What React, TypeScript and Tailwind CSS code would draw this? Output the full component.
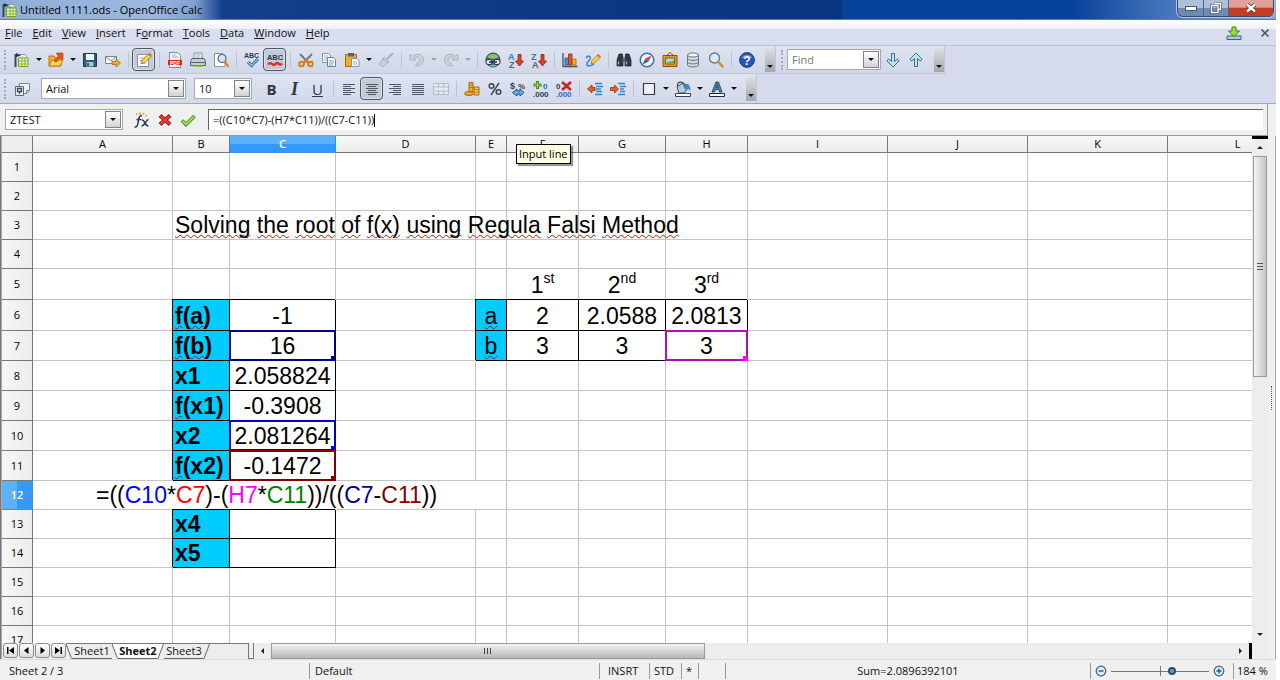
import { Fragment, useState } from 'react';
import type { ReactNode } from 'react';
import clsx from 'clsx';

interface Cell {
  text?: ReactNode;
  label?: boolean;
  boxed?: boolean;
  align?: 'left' | 'center';
  mark?: Mark;
}

interface Mark {
  frame: string;
  handle: string;
}

function Svg({ children }: { children: ReactNode }) {
  return (
    <svg viewBox="0 0 16 16" className="h-4 w-4 shrink-0" fill="none" aria-hidden="true">
      {children}
    </svg>
  );
}

const icons: Record<string, ReactNode> = {
  new: (
    <Svg>
      <path d="M1.500 2v13" stroke="#3b4656" strokeWidth="2" />
      <path d="M4 2.500h7l2.500 3" stroke="#8592a6" fill="#fff" />
      <path d="M4.500 6h9.500v8.500H4.500z" fill="#f2fadf" stroke="#6ea51a" />
      <path d="M4.500 9h9.500M4.500 12h9.500M8 6v8.500M11 6v8.500" stroke="#7fb51e" />
      <path d="M2 1l5 2.500L2 5z" fill="#2a3442" />
    </Svg>
  ),
  open: (
    <Svg>
      <path d="M1 14V4h5l1 2h6v8z" fill="#f2b21e" stroke="#b9750b" />
      <path d="M1 14l3-6h11l-3 6z" fill="#ffd34e" stroke="#c07c10" />
      <path d="M6 9l4.500-5L9 2.500 8.500 1H15v6.500l-1.500-.5L12 5.500 8.500 10z" fill="#e2571c" stroke="#a53208" strokeWidth=".6" />
    </Svg>
  ),
  save: (
    <Svg>
      <path d="M1.500 1.500h13v13h-13z" fill="#355a75" stroke="#1e3a50" />
      <path d="M4 2h8v6H4z" fill="#f1f6fa" />
      <path d="M4.500 10h7v4.500h-7z" fill="#9fc8dd" />
      <path d="M6 11v3" stroke="#1e3a50" strokeWidth="1.500" />
    </Svg>
  ),
  mail: (
    <Svg>
      <path d="M.5 4.500h11v7H.5z" fill="#fff" stroke="#7a8797" />
      <path d="M.5 4.500L6 9l5.500-4.500" stroke="#7a8797" />
      <path d="M7 9.500h4V7l4.500 4-4.500 4v-2.500H7z" fill="#f6a821" stroke="#a8660a" strokeWidth=".8" />
    </Svg>
  ),
  edit: (
    <Svg>
      <path d="M1.500 2.500h11v12h-11z" fill="#fff" stroke="#8794a8" />
      <path d="M4 6h5M4 8.500h3M4 11h6" stroke="#9aa6b8" />
      <path d="M5.500 11.500l1-3.500 6.500-6.500 2.500 2.500L9 10.500z" fill="#ffdb3d" stroke="#8d6a18" strokeWidth=".8" />
      <path d="M12 2.500L13.500 1l2 2L14 4.500z" fill="#e45a50" />
    </Svg>
  ),
  pdf: (
    <Svg>
      <path d="M2.500.5h8l3 3v12h-11z" fill="#f5f7fa" stroke="#7c899b" />
      <path d="M5 3h4M5 5h6" stroke="#a2aebe" />
      <path d="M1 8h14v5H1z" fill="#d8261d" />
      <text x="8" y="12.500" fontSize="5" fontWeight="700" textAnchor="middle" fill="#fff" fontFamily="Liberation Sans, sans-serif">PDF</text>
    </Svg>
  ),
  print: (
    <Svg>
      <path d="M4 1h8v6H4z" fill="#fff" stroke="#7f8b99" />
      <path d="M5.500 3h5M5.500 5h5" stroke="#8fa7c2" />
      <path d="M2 6.500h12l1.500 3v4H.5v-4z" fill="#c6ccd3" stroke="#59636f" />
      <path d="M1 10.500h14" stroke="#59636f" />
      <path d="M3.500 13.500h9v1.500h-9z" fill="#8bd04a" />
    </Svg>
  ),
  preview: (
    <Svg>
      <path d="M1.500 1.500h8l2.500 2v11H1.500z" fill="#fff" stroke="#8592a6" />
      <circle cx="9" cy="6.500" r="4" fill="#cfe6f7" stroke="#52677e" strokeWidth="1.200" />
      <path d="M12 10l3 4" stroke="#d9861c" strokeWidth="2.200" strokeLinecap="round" />
    </Svg>
  ),
  spell: (
    <Svg>
      <text x="7.500" y="6" fontSize="7" fontWeight="700" textAnchor="middle" fill="#2b3a4c" fontFamily="Liberation Sans, sans-serif">ABC</text>
      <path d="M4 10l3.500 3.500L14 7" stroke="#1e5c8c" strokeWidth="3" />
      <path d="M4 10l3.500 3.500L14 7" stroke="#a4d6f2" strokeWidth="1.200" />
    </Svg>
  ),
  autospell: (
    <Svg>
      <text x="8" y="7.500" fontSize="7.500" fontWeight="700" textAnchor="middle" fill="#2b3a4c" fontFamily="Liberation Sans, sans-serif">ABC</text>
      <path d="M1 12.500c1.500-2 3-1.500 4-.5s2.500 1 3.500 0 2.500-1 3.500 0 2 .5 3-.5" stroke="#dc2a1e" strokeWidth="2.400" />
    </Svg>
  ),
  cut: (
    <Svg>
      <path d="M2 2l9 9.500M14 2L5 11.500" stroke="#6f7986" strokeWidth="2" />
      <circle cx="3.500" cy="12" r="2.300" stroke="#e07b14" strokeWidth="2" />
      <circle cx="12.500" cy="12" r="2.300" stroke="#e07b14" strokeWidth="2" />
      <path d="M6 10l2-2 2 2" stroke="#e07b14" strokeWidth="2" />
    </Svg>
  ),
  copy: (
    <Svg>
      <path d="M1.500 1.500h6l2 2v7h-8z" fill="#fff" stroke="#7e92a8" />
      <path d="M3 4h4M3 6h4M3 8h3" stroke="#86b3d4" />
      <path d="M6.500 5.500h6l2 2v7h-8z" fill="#fff" stroke="#6d8198" />
      <path d="M8 9h5M8 11h5M8 13h4" stroke="#67a0c8" />
    </Svg>
  ),
  paste: (
    <Svg>
      <path d="M1.500 2.500h11v12h-11z" fill="#f2ae25" stroke="#a6690a" />
      <path d="M4 1h6v3.500H4z" fill="#5a6470" />
      <path d="M7.500 6.500h5l2.500 2v6H7.500z" fill="#fff" stroke="#7e92a8" />
      <path d="M9 10h4M9 12h4" stroke="#86b3d4" />
    </Svg>
  ),
  brush: (
    <Svg>
      <path d="M15 1L9 7" stroke="#aab2c2" strokeWidth="2" />
      <path d="M6 5l5 5-2 1-4-4z" fill="#d3d8e3" stroke="#a7afc0" />
      <path d="M5 7L1 12l4 3 5-5z" fill="#c9cfdc" stroke="#a7afc0" />
    </Svg>
  ),
  undo: (
    <Svg>
      <path d="M1 2v6h6L5 6c3-2 6-1 6 2 0 2-2 3.500-4 4v2c5-.5 7.500-3 7.500-6.500C14.500 2 8 .5 3.500 4.500z" fill="#cdd3df" stroke="#a9b1c1" />
    </Svg>
  ),
  redo: (
    <Svg>
      <path d="M15 2v6H9l2-2C8 4 5 5 5 8c0 2 2 3.500 4 4v2c-5-.5-7.500-3-7.500-6.500C1.500 2 8 .5 12.500 4.500z" fill="#cdd3df" stroke="#a9b1c1" />
    </Svg>
  ),
  link: (
    <Svg>
      <circle cx="8" cy="8" r="7" fill="#3f6fa8" stroke="#274a73" />
      <path d="M2.500 5c2-4 9-4 11 0-3 2-8 2-11 0zM4 13c2 2 6 2 8 0z" fill="#95c548" />
      <rect x="1" y="7.500" width="6" height="5" rx="2" fill="#dfe6e9" stroke="#29333d" />
      <rect x="9" y="7.500" width="6" height="5" rx="2" fill="#dfe6e9" stroke="#29333d" />
      <path d="M4 10h8" stroke="#29333d" strokeWidth="1.500" />
    </Svg>
  ),
  sortAsc: <SortIcon top="A" bottom="Z" />,
  sortDesc: <SortIcon top="Z" bottom="A" />,
  chart: (
    <Svg>
      <path d="M1 1v13.500h14.500" stroke="#44515f" strokeWidth="1.300" />
      <path d="M3 6h3.500v7H3z" fill="#3e95d8" stroke="#1c5688" strokeWidth=".8" />
      <path d="M6.500 2H10v11H6.500z" fill="#e5502a" stroke="#962b0c" strokeWidth=".8" />
      <path d="M10.500 7H14v6h-3.500z" fill="#f7b02c" stroke="#a36a0b" strokeWidth=".8" />
    </Svg>
  ),
  draw: (
    <Svg>
      <path d="M1 6c2-3 5-2 4 1-1 2-4 4-3 6 1 1.500 5 1 7-1" stroke="#3a8ad2" strokeWidth="1.600" />
      <path d="M6 12l1-3.500L13 2.500l2.500 2.500L9.500 11z" fill="#ffd23c" stroke="#a3701c" strokeWidth=".8" />
      <path d="M12 3.500L13.300 2l2.400 2.400-1.500 1.500z" fill="#e3645b" />
    </Svg>
  ),
  find: (
    <Svg>
      <path d="M3 2h3.500l.5 4v8H1V8zM9.500 2H13l2 6v6H9V6z" fill="#2f3a47" stroke="#161d26" strokeWidth=".7" />
      <path d="M6.500 6h3v4h-3z" fill="#55626f" />
      <path d="M2.500 9.500v3M10.500 9.500v3" stroke="#9fb0c0" strokeWidth="1.300" />
    </Svg>
  ),
  navigator: (
    <Svg>
      <circle cx="8" cy="8" r="6.800" fill="#eef4fb" stroke="#4270a4" strokeWidth="1.500" />
      <path d="M12.500 3.500L9.500 9.500l-3-3z" fill="#e23a26" />
      <path d="M3.500 12.500l3-6 3 3z" fill="#2e5fa0" />
    </Svg>
  ),
  gallery: (
    <Svg>
      <path d="M5 3l3-2.500L11 3" stroke="#8c5a14" />
      <path d="M1 3.500h14v11H1z" fill="#e8981c" stroke="#8c520c" />
      <path d="M3.500 6h9v6h-9z" fill="#a6dcf5" stroke="#7a4a0c" strokeWidth=".8" />
      <path d="M4 11.500c2-3 5-1 8-3v3z" fill="#67a832" />
    </Svg>
  ),
  database: (
    <Svg>
      <path d="M2.500 3v10c0 2.500 11 2.500 11 0V3z" fill="#d5dade" stroke="#6d7780" />
      <ellipse cx="8" cy="3" rx="5.500" ry="2" fill="#f5f7f8" stroke="#6d7780" />
      <path d="M2.500 6.500c0 2.500 11 2.500 11 0M2.500 10c0 2.500 11 2.500 11 0" stroke="#6d7780" />
    </Svg>
  ),
  zoom: (
    <Svg>
      <circle cx="6.500" cy="6" r="5" fill="#dcecf8" stroke="#6a7b8e" strokeWidth="1.400" />
      <path d="M10.500 10l4 4.500" stroke="#dd8a1c" strokeWidth="2.500" strokeLinecap="round" />
    </Svg>
  ),
  help: (
    <Svg>
      <circle cx="8" cy="8" r="7.400" fill="#2757b5" stroke="#173a80" />
      <path d="M2.500 6a6 5 0 0 1 11 0z" fill="#6f97dd" />
      <text x="8" y="12.500" fontSize="12" fontWeight="700" textAnchor="middle" fill="#fff" fontFamily="Liberation Sans, sans-serif">?</text>
    </Svg>
  ),
  down: (
    <Svg>
      <path d="M6.500 1.500h3v8l3-2.500 1.500 2L8 15 2 9l1.500-2 3 2.500z" fill="#c3e4f0" stroke="#37708a" />
    </Svg>
  ),
  up: (
    <Svg>
      <path d="M6.500 14.500h3v-8l3 2.500L14 7 8 1 2 7l1.500 2 3-2.500z" fill="#c3e4f0" stroke="#37708a" />
    </Svg>
  ),
  styles: (
    <Svg>
      <path d="M5.500 2.500h10v7l-3 3h-7z" fill="#edf0f5" stroke="#7b8794" />
      <path d="M12.500 12.500v-3h3" stroke="#7b8794" />
      <path d="M1.500 5.500h8v9h-8z" fill="#e3e8ef" stroke="#5e6a78" />
      <path d="M3.500 7.500h4v3h-4zM5.500 10v3" stroke="#3f4a57" strokeWidth="1.300" />
    </Svg>
  ),
  alignLeft: (
    <Svg>
      <path d="M2 3.500h12M2 5.500h8M2 7.500h12M2 9.500h8M2 11.500h12M2 13.500h8" stroke="#4c5866" />
    </Svg>
  ),
  alignCenter: (
    <Svg>
      <path d="M2 3.500h12M4 5.500h8M2 7.500h12M4 9.500h8M2 11.500h12M4 13.500h8" stroke="#4c5866" />
    </Svg>
  ),
  alignRight: (
    <Svg>
      <path d="M2 3.500h12M6 5.500h8M2 7.500h12M6 9.500h8M2 11.500h12M6 13.500h8" stroke="#4c5866" />
    </Svg>
  ),
  justify: (
    <Svg>
      <path d="M2 3.500h12M2 5.500h12M2 7.500h12M2 9.500h12M2 11.500h12M2 13.500h12" stroke="#4c5866" />
    </Svg>
  ),
  merge: (
    <Svg>
      <path d="M.5 2.500h15v11H.5zM.5 6h15M.5 10h15M5.500 2.500V6M10.500 2.500V6M5.500 10v3.500M10.500 10v3.500" fill="#e4e8f1" stroke="#b3bbca" />
    </Svg>
  ),
  currency: (
    <Svg>
      <path d="M5 1.500h4v9H5z" fill="#f4b13a" stroke="#a86711" />
      <path d="M10 6h5v8h-5z" fill="#f9c65b" stroke="#a86711" />
      <ellipse cx="5" cy="12.500" rx="4.500" ry="2" fill="#f1a327" stroke="#a86711" />
      <path d="M5 4h4M5 6.500h4M10 8.500h5M10 11h5" stroke="#a86711" strokeWidth=".8" />
    </Svg>
  ),
  percent: (
    <Svg>
      <circle cx="4.500" cy="5" r="2.300" stroke="#3a4654" strokeWidth="1.500" />
      <circle cx="11.500" cy="11" r="2.300" stroke="#3a4654" strokeWidth="1.500" />
      <path d="M12 2L4 14" stroke="#3a4654" strokeWidth="1.400" />
    </Svg>
  ),
  standard: (
    <Svg>
      <text x="0" y="7.500" fontSize="9" fontWeight="700" fill="#2f3d4d" fontFamily="Liberation Sans, sans-serif">$</text>
      <text x="8" y="7.500" fontSize="8" fontWeight="700" fill="#2f3d4d" fontFamily="Liberation Sans, sans-serif">%</text>
      <path d="M2.500 11.500L7 8v2h3V8l4 3.500-4 3.500v-2H7v2z" fill="#6bb2e6" stroke="#1d4f86" />
    </Svg>
  ),
  addDecimal: (
    <Svg>
      <path d="M4.500 0v8M.5 4h8" stroke="#3f8f1a" strokeWidth="3" />
      <path d="M4.500 1v6M1.500 4h6" stroke="#a5df5c" />
      <text x="10" y="7.500" fontSize="8" fontWeight="700" fill="#2c67c4" fontFamily="Liberation Sans, sans-serif">0</text>
      <text x="0" y="15.500" fontSize="8" fontWeight="700" fill="#2f3d4d" fontFamily="Liberation Sans, sans-serif">.000</text>
    </Svg>
  ),
  delDecimal: (
    <Svg>
      <text x="0" y="7.500" fontSize="8" fontWeight="700" fill="#2f3d4d" fontFamily="Liberation Sans, sans-serif">0</text>
      <text x="0" y="15.500" fontSize="8" fontWeight="700" fill="#2c67c4" fontFamily="Liberation Sans, sans-serif">.000</text>
      <path d="M6 1l9 8M15 1L6 9" stroke="#cf2019" strokeWidth="2.600" />
    </Svg>
  ),
  outdent: (
    <Svg>
      <path d="M8 2.500h7M9 5.500h7M9 8h5M9 10.500h6M8 13.500h7" stroke="#3884c8" strokeWidth="1.300" />
      <path d="M.5 8L5 4v2.500h3v3H5V12z" fill="#e8601d" stroke="#8f2e08" strokeWidth=".8" />
    </Svg>
  ),
  indent: (
    <Svg>
      <path d="M8 2.500h7M10 5.500h6M10 8h4M10 10.500h5M8 13.500h7" stroke="#3884c8" strokeWidth="1.300" />
      <path d="M8.500 8L4.500 4v2.500H.5v3h4V12z" fill="#e8601d" stroke="#8f2e08" strokeWidth=".8" />
    </Svg>
  ),
  border: (
    <Svg>
      <path d="M2.500 2.500h11v11h-11z" fill="#eef1f8" stroke="#2f3945" strokeWidth="1.200" />
    </Svg>
  ),
  fill: (
    <Svg>
      <path d="M2 6l6-4 6 4-5 6H4z" fill="#b9cfdd" stroke="#3a4856" />
      <path d="M2.500 5.500c-1-6 7-6 7 1" stroke="#3a4856" strokeWidth="1.200" />
      <path d="M10 3c4-1 5.500 2 5.500 8-2-4-3-4-6-2z" fill="#3c8ac4" />
      <path d="M.5 12.500h15v3H.5z" fill="#fff" stroke="#3a4856" />
    </Svg>
  ),
  fontColor: (
    <Svg>
      <path d="M3 11L7 1h2.500L13 11h-2.500l-.8-2.500H6.500L5.500 11zM7 6.500h2.200L8.200 3.500z" fill="#4c86a8" stroke="#1e3a50" strokeWidth=".8" />
      <path d="M.5 12.500h15v3H.5z" fill="#fff" stroke="#1e2a36" />
    </Svg>
  ),
  fx: (
    <Svg>
      <path d="M2 1.500l1 1M6 .5v2M10 1l-1 1.500M13 3.500l-1.500.5" stroke="#f0a818" strokeWidth="1.800" />
      <path d="M.5 15c2 .5 3-1 3.500-4l1-5c.5-2 1.500-2.500 3-2M2.500 7.500h5" stroke="#2c3a4a" strokeWidth="1.500" />
      <path d="M8 8c3-.5 2.500 6.500 6.500 6M14.500 7.500C12 7.500 11 14 7.500 14" stroke="#2c3a4a" strokeWidth="1.500" />
    </Svg>
  ),
  cancel: (
    <Svg>
      <path d="M3 3.500l10 9M13 3.500l-10 9" stroke="#8e120c" strokeWidth="4" />
      <path d="M3.500 4l9 8M12.500 4l-9 8" stroke="#e23a30" strokeWidth="2.400" />
    </Svg>
  ),
  accept: (
    <Svg>
      <path d="M2 8.500l4 4L14.500 4" stroke="#3f8a18" strokeWidth="3.600" />
      <path d="M2.500 9l3.500 3.300L14 4.500" stroke="#a9e052" strokeWidth="1.800" />
    </Svg>
  ),
};

function SortIcon({ top, bottom }: { top: string; bottom: string }) {
  return (
    <Svg>
      <text x="0" y="7.500" fontSize="9" fontWeight="700" fill="#2f7cb6" fontFamily="Liberation Sans, sans-serif">{top}</text>
      <text x="1" y="15.500" fontSize="9" fontWeight="700" fill="#566270" fontFamily="Liberation Sans, sans-serif">{bottom}</text>
      <path d="M10 2.500h3V9h2.500l-4 5-4-5H10z" fill="#dd4326" stroke="#8d1d0c" strokeWidth=".8" />
    </Svg>
  );
}

function Arrow({ dim }: { dim?: boolean }) {
  return <span className={clsx('border-x-[3px] border-t-[3px] border-x-transparent', dim ? 'border-t-[#9aa1b0]' : 'border-t-[#111]')} />;
}

function ToolButton({ icon, label, pressed }: { icon: string; label: string; pressed?: boolean }) {
  return (
    <button
      type="button"
      aria-label={label}
      className={clsx(
        'flex h-[23px] w-[23px] shrink-0 items-center justify-center rounded-sm',
        pressed && 'border border-[#4f5563] bg-[#c5cad8] ring-1 ring-inset ring-[#dde1ec]',
      )}
    >
      {icons[icon]}
    </button>
  );
}

function DropButton({ label, dim }: { label: string; dim?: boolean }) {
  return (
    <button type="button" aria-label={label} className="flex h-[23px] w-[11px] shrink-0 items-center justify-center">
      <Arrow dim={dim} />
    </button>
  );
}

function Sep() {
  return (
    <span className="flex w-2 shrink-0 justify-center">
      <span className="h-4 w-px bg-[#bcc3d3]" />
    </span>
  );
}

function Grip() {
  return <span className="ml-1 h-5 w-[6px] shrink-0 border-l-2 border-dotted border-[#a3a9b8]" />;
}

function Overflow({ label }: { label: string }) {
  return (
    <button type="button" aria-label={label} className="flex h-6 w-[10px] shrink-0 items-end justify-center bg-linear-to-b from-[#dcdfe6] to-[#a4a7ad] pb-1">
      <Arrow />
    </button>
  );
}

function Combo({ value, label, className, muted }: { value: string; label: string; className: string; muted?: boolean }) {
  return (
    <div className={clsx('flex h-[21px] shrink-0 items-stretch border border-[#a5a9b3] bg-white p-px', className)}>
      <input aria-label={label} defaultValue={value} className={clsx('min-w-0 flex-1 px-[3px] outline-none', muted && 'text-[#777]')} />
      <button type="button" aria-label={`${label} list`} className="flex w-4 items-center justify-center border border-[#7f838b] bg-linear-to-b from-white to-[#d3d3d3]">
        <Arrow />
      </button>
    </div>
  );
}

const menus = ['File', 'Edit', 'View', 'Insert', 'Format', 'Tools', 'Data', 'Window', 'Help'];
const accessKey: Record<string, number> = { Format: 1 };

const standardTools: (string | [string, string, boolean?])[] = [
  ['new', 'New'], 'drop', ['open', 'Open'], 'drop', ['save', 'Save'], ['mail', 'E-mail'], '|',
  ['edit', 'Edit File', true], '|', ['pdf', 'Export PDF'], ['print', 'Print'], ['preview', 'Page Preview'], '|',
  ['spell', 'Spelling'], ['autospell', 'AutoSpellcheck', true], '|', ['cut', 'Cut'], ['copy', 'Copy'], ['paste', 'Paste'], 'drop',
  ['brush', 'Format Paintbrush'], '|', ['undo', 'Undo'], 'dim', ['redo', 'Redo'], 'dim', '|', ['link', 'Hyperlink'],
  ['sortAsc', 'Sort Ascending'], ['sortDesc', 'Sort Descending'], '|', ['chart', 'Chart'], ['draw', 'Draw Functions'], '|',
  ['find', 'Find & Replace'], ['navigator', 'Navigator'], ['gallery', 'Gallery'], ['database', 'Data Sources'], ['zoom', 'Zoom'], '|',
  ['help', 'Help'],
];

const formatTools: (string | [string, string, boolean?])[] = [
  '|', ['alignLeft', 'Align Left'], ['alignCenter', 'Align Center', true], ['alignRight', 'Align Right'], ['justify', 'Justified'],
  ['merge', 'Merge Cells'], '|', ['currency', 'Currency'], ['percent', 'Percent'], ['standard', 'Standard Format'],
  ['addDecimal', 'Add Decimal Place'], ['delDecimal', 'Delete Decimal Place'], '|', ['outdent', 'Decrease Indent'],
  ['indent', 'Increase Indent'], '|', ['border', 'Borders'], 'drop', ['fill', 'Background Color'], 'drop', ['fontColor', 'Font Color'], 'drop',
];

function Tools({ items }: { items: typeof standardTools }) {
  return (
    <>
      {items.map((item, i) => {
        if (item === '|') return <Sep key={i} />;
        if (typeof item === 'string') return <DropButton key={i} label="More" dim={item === 'dim'} />;
        return <ToolButton key={i} icon={item[0]} label={item[1]} pressed={item[2]} />;
      })}
    </>
  );
}

function Wavy({ children, dark }: { children: ReactNode; dark?: boolean }) {
  return (
    <span
      className={clsx(
        'underline decoration-wavy decoration-1 underline-offset-1 [text-decoration-skip-ink:none]',
        dark ? 'decoration-[#8a2048]' : 'decoration-[#f00000]',
      )}
    >
      {children}
    </span>
  );
}

function Ordinal({ n, suffix }: { n: string; suffix: string }) {
  return (
    <>
      {n}
      <sup className="-top-[10px] text-[14px]">{suffix}</sup>
    </>
  );
}

const title = 'Solving the root of f(x) using Regula Falsi Method';

const columns: [string, string][] = [
  ['A', 'w-[140px]'], ['B', 'w-[57px]'], ['C', 'w-[106px]'], ['D', 'w-[140px]'], ['E', 'w-[31px]'], ['F', 'w-[72px]'],
  ['G', 'w-[87px]'], ['H', 'w-[82px]'], ['I', 'w-[140px]'], ['J', 'w-[140px]'], ['K', 'w-[140px]'], ['L', 'w-[140px]'],
];

const marks: Record<string, Mark> = {
  navy: { frame: 'border-[#000080]', handle: 'bg-[#000080]' },
  blue: { frame: 'border-[#0000c0]', handle: 'bg-[#0000ff]' },
  maroon: { frame: 'border-[#800000]', handle: 'bg-[#800000]' },
  magenta: { frame: 'border-[#b010b0]', handle: 'bg-[#ff00ff]' },
};

const fOf = (arg: ReactNode) => <><Wavy dark>f</Wavy>({arg})</>;
const label = (text: ReactNode): Cell => ({ text: <b>{text}</b>, label: true, boxed: true, align: 'left' });
const value = (text?: ReactNode, mark?: Mark): Cell => ({ text, boxed: true, mark });

const cells: Record<string, Cell> = {
  B3: {
    align: 'left',
    text: title.split(' ').map((word, i) => (
      <Fragment key={i}>
        {i > 0 && ' '}
        <Wavy>{word}</Wavy>
      </Fragment>
    )),
  },
  F5: { text: <Ordinal n="1" suffix="st" /> },
  G5: { text: <Ordinal n="2" suffix="nd" /> },
  H5: { text: <Ordinal n="3" suffix="rd" /> },
  B6: label(fOf(<Wavy dark>a</Wavy>)),
  C6: value('-1'),
  B7: label(fOf(<Wavy dark>b</Wavy>)),
  C7: value('16', marks.navy),
  B8: label('x1'),
  C8: value('2.058824'),
  B9: label(fOf('x1')),
  C9: value('-0.3908'),
  B10: label('x2'),
  C10: value('2.081264', marks.blue),
  B11: label(fOf('x2')),
  C11: value('-0.1472', marks.maroon),
  B13: label('x4'),
  C13: value(),
  B14: label('x5'),
  C14: value(),
  E6: { text: <Wavy dark>a</Wavy>, label: true, boxed: true },
  F6: value('2'),
  G6: value('2.0588'),
  H6: value('2.0813'),
  E7: { text: <Wavy dark>b</Wavy>, label: true, boxed: true },
  F7: value('3'),
  G7: value('3'),
  H7: value('3', marks.magenta),
};

function rowHeight(row: number) {
  if (row === 5 || row === 6) return 'h-[31px]';
  if (row >= 7 && row <= 11) return 'h-[30px]';
  return 'h-[29px]';
}

function GridCell({ cell }: { cell: Cell }) {
  return (
    <td
      className={clsx(
        'relative border-r border-b p-0 align-bottom text-[23px] leading-7 whitespace-nowrap',
        cell.boxed ? 'border-black shadow-[-1px_-1px_0_0_#000]' : 'border-[#c4c4c4]',
        cell.label && 'bg-[#00ccff]',
        cell.align === 'left' ? 'pl-[2px] text-left' : 'text-center',
      )}
    >
      {cell.text && <span className="relative z-10">{cell.text}</span>}
      {cell.mark && (
        <>
          <span className={clsx('absolute -inset-px z-10 border-2', cell.mark.frame)} />
          <span className={clsx('absolute -right-px -bottom-px z-10 h-[5px] w-[5px]', cell.mark.handle)} />
        </>
      )}
    </td>
  );
}

function InlineFormula() {
  return (
    <td colSpan={5} className="border-r border-b border-[#c4c4c4] bg-white p-0 pl-[63px] text-left align-bottom text-[23px] leading-7 whitespace-nowrap">
      =((<span className="text-[#0000ff]">C10</span>*<span className="text-[#ff0000]">C7</span>)-(
      <span className="text-[#ff00ff]">H7</span>*<span className="text-[#008000]">C11</span>))/((
      <span className="text-[#000080]">C7</span>-<span className="text-[#800000]">C11</span>))
    </td>
  );
}

function SheetGrid() {
  return (
    <table className="w-0 min-w-full table-fixed border-separate border-spacing-0 font-['Liberation_Sans',Arial,sans-serif] text-black">
      <colgroup>
        <col className="w-[31px]" />
        {columns.map(([name, width]) => (
          <col key={name} className={width} />
        ))}
      </colgroup>
      <thead>
        <tr className="h-[17px] font-['Open_Sans','Segoe_UI',sans-serif] text-[11px] leading-4">
          <th aria-label="Select all" className="border-r border-b border-[#777] bg-[#eee] p-0" />
          {columns.map(([name]) => (
            <th
              key={name}
              scope="col"
              className={clsx(
                'border-r border-b p-0',
                name === 'C'
                  ? 'border-[#3d8fe0] bg-linear-to-b from-[#5fb0fb] from-50% to-[#3399ff] to-50% font-semibold text-white'
                  : 'border-[#777] bg-linear-to-b from-[#f7f7f7] to-[#ececec] font-normal',
              )}
            >
              {name}
            </th>
          ))}
        </tr>
      </thead>
      <tbody>
        {Array.from({ length: 17 }, (_, i) => i + 1).map(row => (
          <tr key={row} className={rowHeight(row)}>
            <th
              scope="row"
              className={clsx(
                "border-r border-b p-0 font-['Open_Sans','Segoe_UI',sans-serif] text-[11px] leading-4",
                row === 12
                  ? 'border-[#3d8fe0] bg-linear-to-r from-[#5fb0fb] from-50% to-[#3399ff] to-50% font-semibold text-white'
                  : 'border-[#777] bg-linear-to-r from-[#f7f7f7] to-[#ececec] font-normal',
              )}
            >
              {row}
            </th>
            {row === 12 && <InlineFormula />}
            {columns.slice(row === 12 ? 5 : 0).map(([name]) => (
              <GridCell key={name} cell={cells[name + row] ?? {}} />
            ))}
          </tr>
        ))}
      </tbody>
    </table>
  );
}

function TitleBar() {
  return (
    <header className="flex h-5 items-start justify-between border-b border-[#5d7fb0] bg-[linear-gradient(90deg,#8fadd6_0,#9cb8df_150px,#7f9fce_195px,#12408c_222px,#0b3681_50%,#0a3681_66%,#07429a_66%,#07429a_84%,#4a78bd_92%,#8aa8d6)]">
      <div className="flex h-[19px] items-center gap-1 pl-[2px] text-[11px] leading-4 text-black">
        <span className="flex h-4 w-[14px] items-center">{icons.new}</span>
        <h1>Untitled 1111.ods - OpenOffice Calc</h1>
      </div>
      <div className="mr-[2px] flex h-[17px] overflow-hidden rounded-b-md border border-t-0 border-[#34496c] ring-1 ring-[#b5c6e0]">
        <button type="button" aria-label="Minimize" className="flex w-[26px] items-end justify-center border-r border-[#4d648a] bg-linear-to-b from-[#b0bfd8] from-50% to-[#7089b3] to-50% pb-[5px]">
          <span className="h-[5px] w-3 border border-[#4a566d] bg-white" />
        </button>
        <button type="button" aria-label="Restore" className="flex w-[25px] items-center justify-center border-r border-[#4d648a] bg-linear-to-b from-[#b0bfd8] from-50% to-[#7089b3] to-50%">
          <svg viewBox="0 0 12 12" className="h-3 w-3" fill="none" aria-hidden="true">
            <path d="M4.500 1.500h6v6h-2M1.500 3.500h6.500v7H1.500z" stroke="#3e4a60" strokeWidth="2.600" />
            <path d="M4.500 1.500h6v6h-2M1.500 3.500h6.500v7H1.500z" stroke="#fff" strokeWidth="1.400" />
          </svg>
        </button>
        <button type="button" aria-label="Close" className="flex w-11 items-center justify-center bg-linear-to-b from-[#e0a198] from-45% to-[#c23e22] to-50%">
          <svg viewBox="0 0 12 12" className="h-3 w-3" fill="none" aria-hidden="true">
            <path d="M2 2.500l8 7M10 2.500l-8 7" stroke="#5a2a28" strokeWidth="4" />
            <path d="M2 2.500l8 7M10 2.500l-8 7" stroke="#fff" strokeWidth="2.400" />
          </svg>
        </button>
      </div>
    </header>
  );
}

function MenuBar() {
  return (
    <nav className="flex h-[26px] items-center border-b border-[#b9c1d3] bg-linear-to-b from-white from-0% via-[#eef1f8] via-35% to-[#d9deee] to-36% pr-[6px] pl-[5px] text-[11px]">
      {menus.map(menu => {
        const at = accessKey[menu] ?? 0;
        return (
          <button key={menu} type="button" className="mr-[10px] leading-4">
            {menu.slice(0, at)}
            <u>{menu[at]}</u>
            {menu.slice(at + 1)}
          </button>
        );
      })}
      <button type="button" aria-label="Download update" className="mr-[18px] ml-auto">
        <Svg>
          <path d="M1 11h14v3.500H1z" fill="#a9cede" stroke="#37657c" />
          <path d="M6 2h4v4h3.500L8 11.500 2.500 6H6z" fill="#9be02e" stroke="#3f8312" />
        </Svg>
      </button>
      <button type="button" aria-label="Close document">
        <svg viewBox="0 0 10 10" className="h-[10px] w-[10px]" fill="none" aria-hidden="true">
          <path d="M1.500 1.500l7 7M8.500 1.500l-7 7" stroke="#4a5262" strokeWidth="1.600" />
        </svg>
      </button>
    </nav>
  );
}

function FormulaBar() {
  const [formula, setFormula] = useState('=((C10*C7)-(H7*C11))/((C7-C11))');
  return (
    <div className="mr-2 flex h-8 items-center border-r border-b border-[#999] bg-[#f0f0f0] pr-1 pl-[5px]">
      <Combo label="Name Box" value="ZTEST" className="w-[118px]" />
      <div className="flex w-[85px] shrink-0 pl-[7px]">
        <ToolButton icon="fx" label="Function Wizard" />
        <ToolButton icon="cancel" label="Cancel" />
        <ToolButton icon="accept" label="Accept" />
      </div>
      <label className="flex h-[21px] min-w-0 flex-1 items-center border-t border-l border-[#666] bg-white pl-1">
        <input
          aria-label="Input line"
          value={formula}
          onChange={e => setFormula(e.target.value)}
          className="[field-sizing:content] outline-none"
        />
        <span className="h-[13px] w-px bg-black" />
      </label>
    </div>
  );
}

const navPaths: [string, string][] = [
  ['First sheet', 'M3 3h1.500v7H3zM10 3v7L5 6.500z'],
  ['Previous sheet', 'M8.500 3v7l-4.500-3.500z'],
  ['Next sheet', 'M4.500 3v7L9 6.500z'],
  ['Last sheet', 'M3 3v7l5-3.500zM8.500 3H10v7H8.500z'],
];

function Slant({ back, under }: { back?: boolean; under?: string }) {
  return (
    <svg viewBox="0 0 6 15" className="h-[15px] w-[6px] shrink-0" fill="none" aria-hidden="true">
      {under && <path d={under} fill="#fff" />}
      <path d={back ? 'M0 0L5.500 14.500' : 'M5.500 0L0 14.500'} stroke="#666" />
    </svg>
  );
}

function SheetBar() {
  return (
    <div className="flex h-4 items-stretch bg-[#ededed]">
      <div className="flex gap-px pl-px">
        {navPaths.map(([name, d]) => (
          <button key={name} type="button" aria-label={name} className="flex h-[15px] w-[15px] items-center justify-center rounded-[3px] border border-[#8c8c8c] bg-linear-to-b from-white to-[#ddd]">
            <svg viewBox="0 0 13 13" className="h-[13px] w-[13px]" aria-hidden="true">
              <path d={d} fill="#000" />
            </svg>
          </button>
        ))}
      </div>
      <div className="flex w-[183px] border-t border-r border-[#777] text-[11px] leading-[14px]">
        <Slant back />
        <button type="button" className="h-[15px] w-10 border-b border-[#666]">Sheet1</button>
        <Slant back under="M0 0h6v15z" />
        <button type="button" className="h-[15px] w-10 border-b border-[#666] bg-white font-bold">Sheet2</button>
        <Slant under="M0 0h6L0 15z" />
        <button type="button" className="h-[15px] w-10 border-b border-[#666]">Sheet3</button>
        <Slant />
      </div>
      <div className="w-[5px] border-r border-b border-[#777]" />
      <button type="button" aria-label="Scroll left" className="flex w-[17px] items-center justify-center">
        <span className="border-y-[3px] border-r-[3px] border-y-transparent border-r-[#222]" />
      </button>
      <div className="flex flex-1">
        <div className="flex w-[45%] items-center justify-center border border-[#999] bg-linear-to-b from-[#f2f2f2] to-[#b9b9b9]">
          <span className="h-[6px] w-2 bg-[repeating-linear-gradient(90deg,#444_0_1px,transparent_1px_3px)]" />
        </div>
      </div>
      <button type="button" aria-label="Scroll right" className="mr-1 flex w-[10px] items-center justify-center">
        <span className="border-y-[3px] border-l-[3px] border-y-transparent border-l-[#222]" />
      </button>
      <span className="w-[3px] bg-black" />
    </div>
  );
}

function VerticalScroll() {
  return (
    <div className="flex w-4 shrink-0 flex-col bg-[#ededed]">
      <span className="h-[3px] bg-black" />
      <button type="button" aria-label="Scroll up" className="flex h-[17px] items-center justify-center">
        <span className="border-x-[3px] border-b-[3px] border-x-transparent border-b-[#222]" />
      </button>
      <div className="flex-1 px-px">
        <div className="flex h-[47%] items-center justify-center border border-[#999] bg-linear-to-r from-[#f5f5f5] to-[#c4c4c4]">
          <span className="h-[7px] w-[6px] bg-[repeating-linear-gradient(180deg,#555_0_1px,transparent_1px_3px)]" />
        </div>
      </div>
      <button type="button" aria-label="Scroll down" className="mb-4 flex h-[17px] items-center justify-center">
        <span className="border-x-[3px] border-t-[3px] border-x-transparent border-t-[#222]" />
      </button>
    </div>
  );
}

function ZoomButton({ label: name, d }: { label: string; d: string }) {
  return (
    <button type="button" aria-label={name}>
      <svg viewBox="0 0 12 12" className="h-3 w-3" fill="none" aria-hidden="true">
        <circle cx="6" cy="6" r="4.800" fill="#d7eefa" stroke="#3c5f80" strokeWidth="1.200" />
        <path d={d} stroke="#1f5c8c" strokeWidth="1.400" />
      </svg>
    </button>
  );
}

function StatusBar() {
  return (
    <footer className="flex h-[21px] items-center border-t border-[#dcdcdc] bg-[#f0f0f0] pt-[2px] text-[11px] leading-4">
      <span className="w-[309px] pl-[9px]">Sheet 2 / 3</span>
      <span className="w-[290px] border-l border-[#999] pl-[5px]">Default</span>
      <span className="w-[50px] border-l border-[#999] pl-2">INSRT</span>
      <span className="w-8 border-l border-[#999] pl-1">STD</span>
      <span className="w-[17px] border-l border-[#999] pl-1">*</span>
      <span className="h-4 w-[27px] border-l border-[#999]" />
      <span className="flex-1 border-l border-[#999] text-center">Sum=2.0896392101</span>
      <div className="flex h-4 w-[143px] items-center gap-1 border-l border-[#999] pl-1">
        <ZoomButton label="Zoom out" d="M3.500 6h5" />
        <div className="relative flex h-4 min-w-0 flex-1 items-center">
          <span className="absolute left-1/2 h-[10px] w-px bg-[#777]" />
          <input
            type="range"
            aria-label="Zoom"
            min={0}
            max={100}
            defaultValue={63}
            className="relative h-px w-full appearance-none bg-[#777] [&::-webkit-slider-thumb]:h-2 [&::-webkit-slider-thumb]:w-2 [&::-webkit-slider-thumb]:appearance-none [&::-webkit-slider-thumb]:rounded-full [&::-webkit-slider-thumb]:border-2 [&::-webkit-slider-thumb]:border-[#2c4f70] [&::-webkit-slider-thumb]:bg-[#6f9dc0]"
          />
        </div>
        <ZoomButton label="Zoom in" d="M3.500 6h5M6 3.500v5" />
        <span className="w-1" />
      </div>
      <span className="w-[43px] border-l border-[#999] pl-[3px] whitespace-nowrap">184 %</span>
    </footer>
  );
}

export default function App() {
  return (
    <div className="h-screen bg-white pr-1">
      <div className="relative flex h-full flex-col overflow-hidden bg-[#f0f0f0] font-['Open_Sans','Segoe_UI',sans-serif] text-[11px] leading-4 text-[#111]">
        <TitleBar />
        <MenuBar />
        <div className="border-b border-[#a4a9b6] bg-[#d5dbec]">
          <div className="flex h-7">
            <div className="flex items-center border-r border-b border-[#c0c7d8] bg-linear-to-b from-[#dfe4f1] to-[#d0d7e8]">
              <Grip />
              <Tools items={standardTools} />
              <span className="w-[7px]" />
              <Overflow label="Standard toolbar options" />
            </div>
            <div className="flex items-center border-r border-b border-[#c0c7d8] bg-linear-to-b from-[#dfe4f1] to-[#d0d7e8] pl-px">
              <Grip />
              <Combo label="Find text" value="Find" className="w-[94px]" muted />
              <ToolButton icon="down" label="Find Next" />
              <ToolButton icon="up" label="Find Previous" />
              <span className="w-[7px]" />
              <Overflow label="Find toolbar options" />
            </div>
          </div>
          <div className="flex h-[29px]">
            <div className="flex items-center border-r border-[#c0c7d8] bg-linear-to-b from-[#dfe4f1] to-[#d3d9ea]">
              <Grip />
              <ToolButton icon="styles" label="Styles and Formatting" />
              <Combo label="Font Name" value="Arial" className="ml-2 w-[145px]" />
              <Combo label="Font Size" value="10" className="mx-2 w-[58px]" />
              <button type="button" className="h-[23px] w-[23px] text-[15px] font-bold text-[#2b3846]">B</button>
              <button type="button" className="h-[23px] w-[23px] font-['Liberation_Serif',serif] text-[18px] font-bold text-[#2b3846] italic">I</button>
              <button type="button" className="h-[23px] w-[23px] text-[15px] text-[#2b3846] underline">U</button>
              <Tools items={formatTools} />
              <span className="w-[7px]" />
              <Overflow label="Formatting toolbar options" />
            </div>
          </div>
        </div>
        <FormulaBar />
        <div className="flex min-h-0 flex-1 border-l border-[#777]">
          <div className="flex min-w-0 flex-1 flex-col border-l border-[#aaa]">
            <div className="isolate min-h-0 flex-1 overflow-hidden bg-white">
              <SheetGrid />
            </div>
            <SheetBar />
          </div>
          <VerticalScroll />
          <div className="flex w-2 shrink-0 items-center justify-center border-r border-[#aaa]">
            <span className="h-6 border-l border-dotted border-[#555]" />
          </div>
        </div>
        <StatusBar />
        <div role="tooltip" className="absolute top-[144px] left-[516px] border border-black bg-[#ffffe1] px-[2px] leading-[18px] text-black shadow-[2px_2px_1px_#0006]">
          Input line
        </div>
      </div>
    </div>
  );
}
